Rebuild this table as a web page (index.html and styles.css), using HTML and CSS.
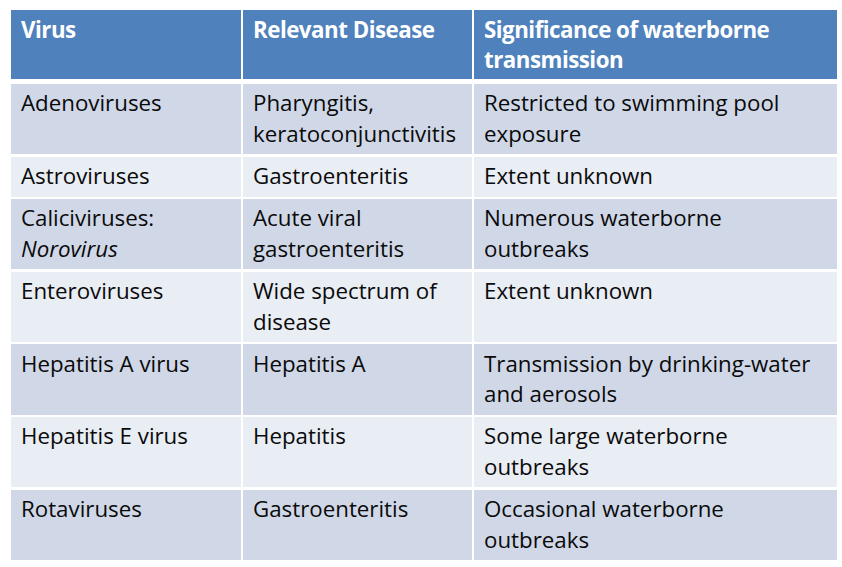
FILE: index.html
```html
<!DOCTYPE html>
<html>
<head>
<meta charset="utf-8">
<link rel="stylesheet" href="styles.css">
</head>
<body>
<div class="table">
  <div class="cell head">Virus</div>
  <div class="cell head">Relevant Disease</div>
  <div class="cell head">Significance of waterborne<br>transmission</div>

  <div class="cell odd">Adenoviruses</div>
  <div class="cell odd">Pharyngitis,<br>keratoconjunctivitis</div>
  <div class="cell odd">Restricted to swimming pool<br>exposure</div>

  <div class="cell even">Astroviruses</div>
  <div class="cell even">Gastroenteritis</div>
  <div class="cell even">Extent unknown</div>

  <div class="cell odd">Caliciviruses:<br><em>Norovirus</em></div>
  <div class="cell odd">Acute viral<br>gastroenteritis</div>
  <div class="cell odd">Numerous waterborne<br>outbreaks</div>

  <div class="cell even">Enteroviruses</div>
  <div class="cell even">Wide spectrum of<br>disease</div>
  <div class="cell even">Extent unknown</div>

  <div class="cell odd">Hepatitis A virus</div>
  <div class="cell odd">Hepatitis A</div>
  <div class="cell odd">Transmission by drinking-water<br>and aerosols</div>

  <div class="cell even">Hepatitis E virus</div>
  <div class="cell even">Hepatitis</div>
  <div class="cell even">Some large waterborne<br>outbreaks</div>

  <div class="cell odd">Rotaviruses</div>
  <div class="cell odd">Gastroenteritis</div>
  <div class="cell odd">Occasional waterborne<br>outbreaks</div>
</div>
</body>
</html>
```
FILE: styles.css
```css
html, body {
  margin: 0;
  padding: 0;
  background: #ffffff;
}
body {
  padding: 10px 0 0 11px;
  font-family: "Open Sans", "Liberation Sans", sans-serif;
}
.table {
  display: grid;
  grid-template-columns: 230px 229px 363px;
  column-gap: 2px;
  row-gap: 2.2px;
  width: 826px;
}
.cell {
  font-size: 22.3px;
  line-height: 30.5px;
  padding: 4.5px 10px 5px 10px;
  color: #0a0a0a;
  white-space: nowrap;
}
.head {
  background: #4f81bd;
  color: #ffffff;
  font-weight: bold;
  padding-bottom: 3.5px;
  margin-bottom: 2.8px;
  letter-spacing: -0.5px;
}
.odd {
  background: #d0d8e8;
}
.even {
  background: #e9edf4;
}
em {
  font-style: italic;
}
```
